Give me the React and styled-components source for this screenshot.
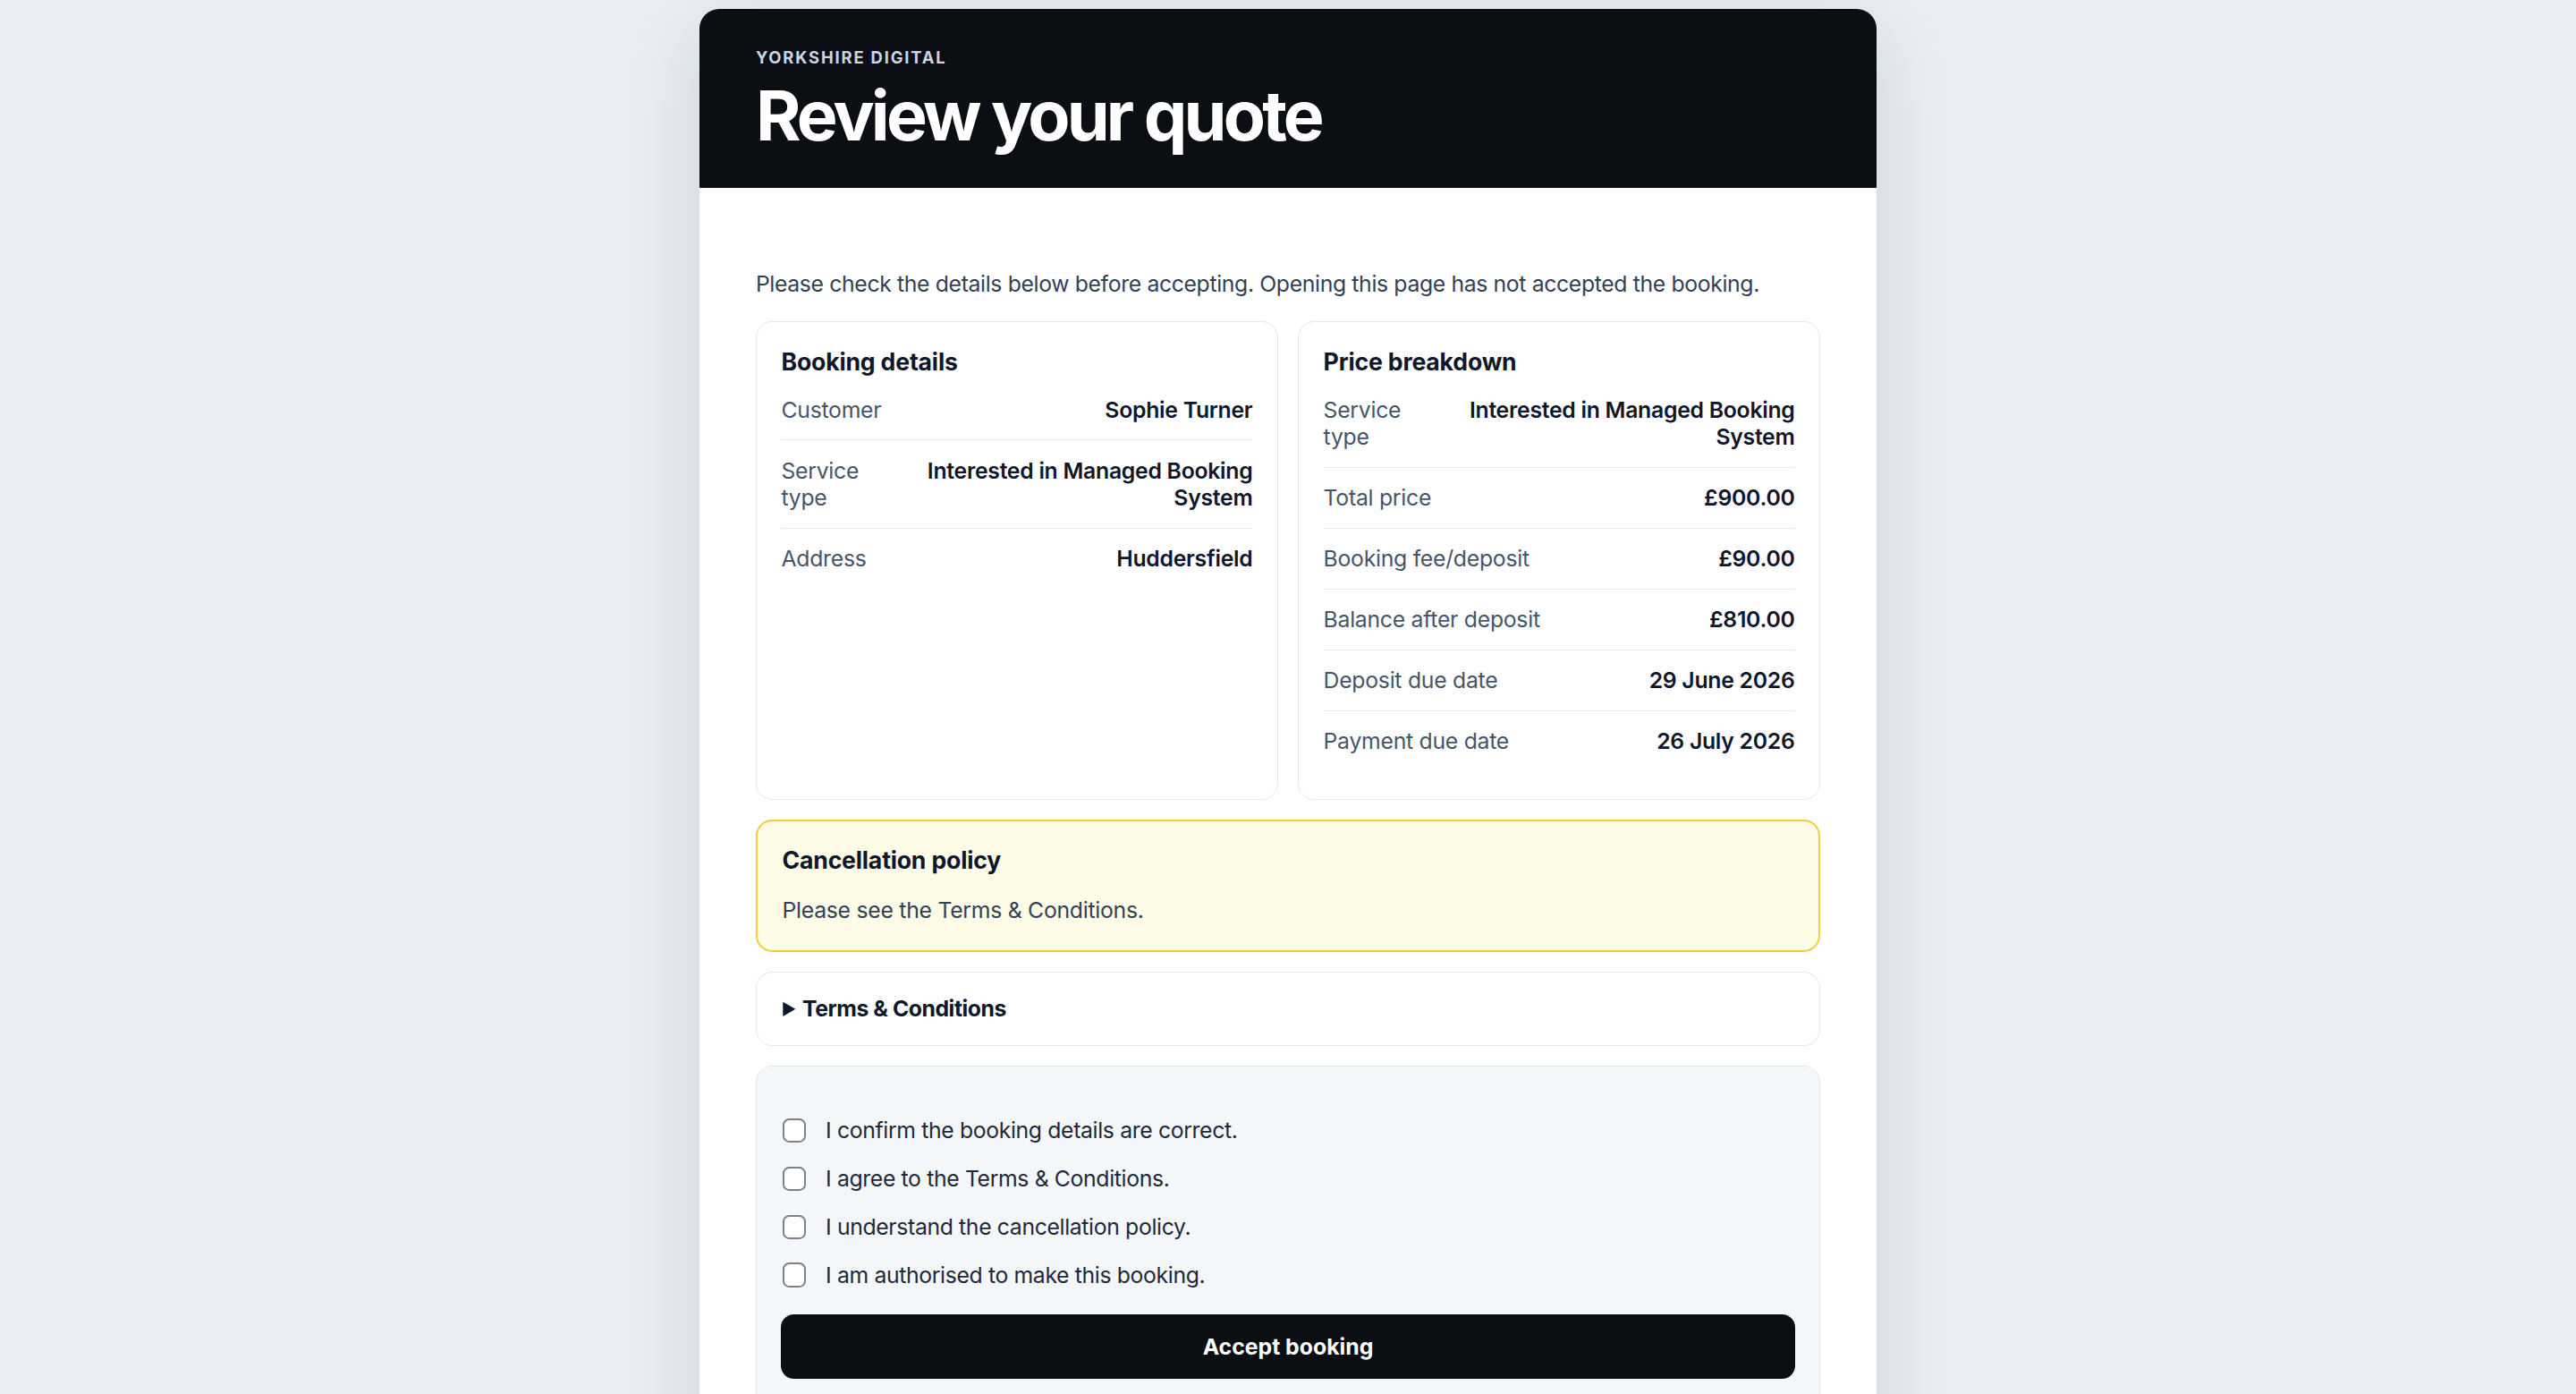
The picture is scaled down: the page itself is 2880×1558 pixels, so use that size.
import styled, { createGlobalStyle } from "styled-components"

const bookingRows = [
  { label: "Customer", value: "Sophie Turner" },
  { label: "Service type", value: "Interested in Managed Booking System" },
  { label: "Address", value: "Huddersfield" },
]

const priceRows = [
  { label: "Service type", value: "Interested in Managed Booking System" },
  { label: "Total price", value: "£900.00" },
  { label: "Booking fee/deposit", value: "£90.00" },
  { label: "Balance after deposit", value: "£810.00" },
  { label: "Deposit due date", value: "29 June 2026" },
  { label: "Payment due date", value: "26 July 2026" },
]

const confirmations = [
  "I confirm the booking details are correct.",
  "I agree to the Terms & Conditions.",
  "I understand the cancellation policy.",
  "I am authorised to make this booking.",
]

const App = () => {
  const accept = e => {
    e.preventDefault()
  }

  return (
    <>
      <GlobalStyle />
      <Page>
        <Card>
          <Header>
            <Eyebrow>Yorkshire Digital</Eyebrow>
            <Title>Review your quote</Title>
          </Header>
          <Body>
            <Intro>Please check the details below before accepting. Opening this page has not accepted the booking.</Intro>
            <Columns>
              <InfoBox>
                <BoxTitle>Booking details</BoxTitle>
                <dl>
                  {bookingRows.map(r => (
                    <Row key={r.label}>
                      <dt>{r.label}</dt>
                      <dd>{r.value}</dd>
                    </Row>
                  ))}
                </dl>
              </InfoBox>
              <InfoBox>
                <BoxTitle>Price breakdown</BoxTitle>
                <dl>
                  {priceRows.map(r => (
                    <Row key={r.label}>
                      <dt>{r.label}</dt>
                      <dd>{r.value}</dd>
                    </Row>
                  ))}
                </dl>
              </InfoBox>
            </Columns>
            <Notice>
              <BoxTitle as="h3">Cancellation policy</BoxTitle>
              <p>Please see the Terms &amp; Conditions.</p>
            </Notice>
            <Terms>
              <summary>Terms &amp; Conditions</summary>
            </Terms>
            <Consent onSubmit={accept}>
              <ConsentList>
                {confirmations.map((text, i) => (
                  <Check key={i}>
                    <input type="checkbox" name={`confirm-${i}`} />
                    <span>{text}</span>
                  </Check>
                ))}
              </ConsentList>
              <AcceptButton type="submit">Accept booking</AcceptButton>
            </Consent>
          </Body>
        </Card>
      </Page>
    </>
  )
}

const GlobalStyle = createGlobalStyle`
  html {
    zoom: 1.8367;
    background: #e9eef5;
  }

  body {
    margin: 0;
    background: #e9eef5;
    font-family: Inter, "Noto Sans", sans-serif;
    color: #0f172a;
  }

  * { box-sizing: border-box; }
`

const Page = styled.main`
  display: flex;
  justify-content: center;
  padding: 5.5px 16px 48px;
`

const Card = styled.div`
  width: 716px;
  background: #fff;
  border-radius: 12px;
  overflow: hidden;
  box-shadow: 0 14px 48px rgba(15, 23, 42, 0.12);
`

const Header = styled.header`
  background: #0b0f14;
  padding: 23px 34px 22px;
  color: #fff;
`

const Eyebrow = styled.div`
  font-size: 10px;
  line-height: 14px;
  font-weight: 700;
  letter-spacing: 0.1em;
  text-transform: uppercase;
  color: #cbd5e1;
`

const Title = styled.h1`
  margin: 6px 0 0;
  font-size: 42px;
  line-height: 44px;
  font-weight: 700;
  letter-spacing: -0.05em;
`

const Body = styled.div`
  display: flex;
  flex-direction: column;
  gap: 12px;
  padding: 47px 34px 40px;
`

const Intro = styled.p`
  margin: 0;
  font-size: 13.5px;
  line-height: 22px;
  letter-spacing: -0.2px;
  color: #334155;
`

const Columns = styled.div`
  display: grid;
  grid-template-columns: 1fr 1fr;
  gap: 12px;
`

const InfoBox = styled.section`
  border: 1px solid #e2e8f0;
  border-radius: 10px;
  padding: 15px 15px 17px;

  dl { margin: 0; }
`

const BoxTitle = styled.h2`
  margin: 0 0 2px;
  font-size: 14.5px;
  line-height: 18px;
  font-weight: 700;
  letter-spacing: -0.1px;
  color: #0f172a;
`

const Row = styled.div`
  display: flex;
  justify-content: space-between;
  gap: 16px;
  padding: 10px 0;
  font-size: 13.5px;
  line-height: 16.5px;
  letter-spacing: -0.15px;
  border-bottom: 1px solid #e2e8f0;

  &:last-child { border-bottom: 0 none; }

  dt { color: #475569; }

  dd {
    margin: 0;
    text-align: right;
    font-weight: 600;
    color: #0f172a;
  }
`

const Notice = styled.section`
  border: 1.5px solid #f5cb3c;
  background: #fefce6;
  border-radius: 10px;
  padding: 14.5px 15px 14.5px;

  h3 { margin: 0; }

  p {
    margin: 11.5px 0 0;
    font-size: 13.5px;
    line-height: 20px;
    letter-spacing: -0.15px;
    color: #334155;
  }
`

const Terms = styled.details`
  border: 1px solid #e2e8f0;
  border-radius: 10px;
  padding: 13px 15px 13px 16px;

  summary {
    font-size: 13.5px;
    line-height: 18px;
    font-weight: 700;
    letter-spacing: -0.25px;
    cursor: pointer;
  }
`

const Consent = styled.form`
  border: 1px solid #e2e8f0;
  background: #f4f7f9;
  border-radius: 10px;
  padding: 30.5px 15px 24px;
  display: flex;
  flex-direction: column;
  gap: 15.5px;
`

const ConsentList = styled.div`
  display: flex;
  flex-direction: column;
  gap: 12.3px;
`

const Check = styled.label`
  display: flex;
  align-items: center;
  gap: 12px;
  font-size: 13.5px;
  line-height: 17px;
  letter-spacing: -0.2px;
  color: #1e293b;
  cursor: pointer;

  input {
    appearance: none;
    margin: 0 0 0 1px;
    width: 14px;
    height: 15px;
    border: 1.5px solid #7b8089;
    border-radius: 4px;
    background: #fff;
    flex: none;
  }
`

const AcceptButton = styled.button`
  height: 39px;
  border: 0 none;
  border-radius: 8px;
  background: #0b0f14;
  color: #fff;
  font-family: inherit;
  font-size: 13.5px;
  font-weight: 700;
  cursor: pointer;
`

export default App
